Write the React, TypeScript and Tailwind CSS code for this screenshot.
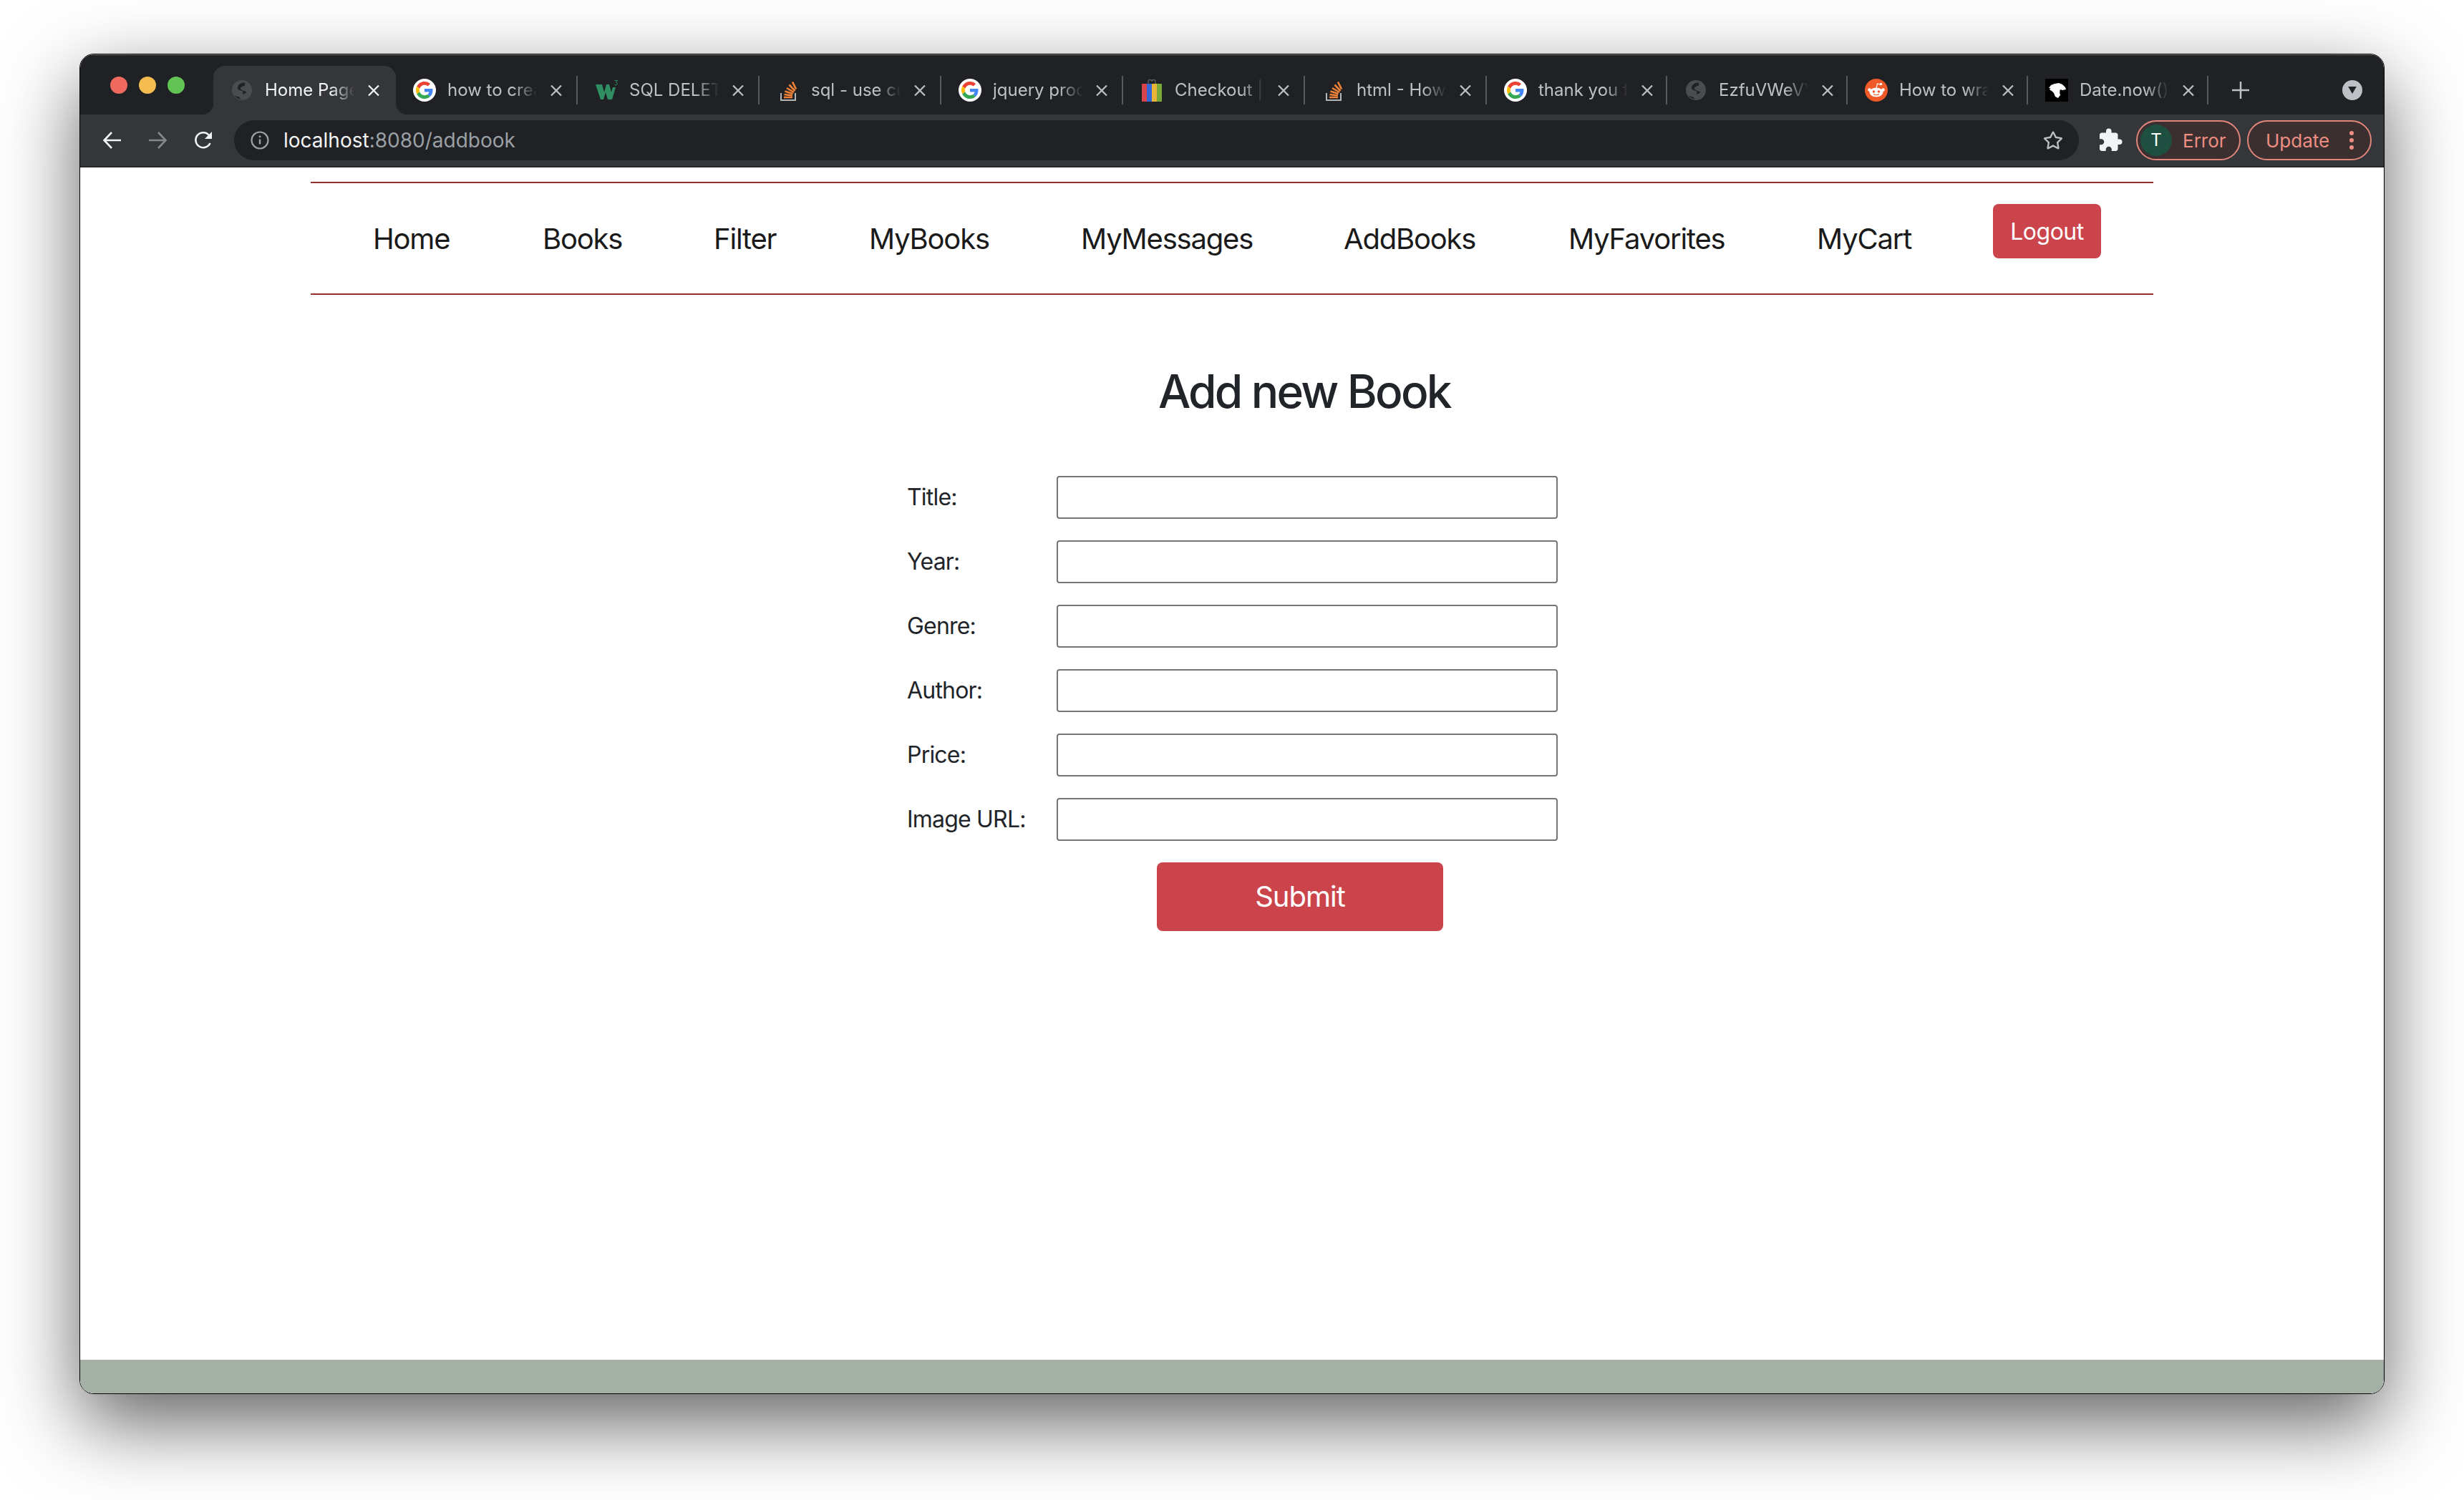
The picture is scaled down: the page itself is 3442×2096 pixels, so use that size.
import React from "react";
import { MdExtension } from "react-icons/md";
import { FaRegStar } from "react-icons/fa";

const font = "font-['Inter','Liberation_Sans',sans-serif]";

function Google() {
  return (
    <div className="w-[32px] h-[32px] rounded-full bg-white flex items-center justify-center">
      <svg viewBox="0 0 48 48" className="w-[24px] h-[24px]">
        <path fill="#EA4335" d="M24 9.5c3.54 0 6.71 1.22 9.21 3.6l6.85-6.85C35.9 2.38 30.47 0 24 0 14.62 0 6.51 5.38 2.56 13.22l7.98 6.19C12.43 13.72 17.74 9.5 24 9.5z" />
        <path fill="#4285F4" d="M46.98 24.55c0-1.57-.15-3.09-.38-4.55H24v9.02h12.94c-.58 2.96-2.26 5.48-4.78 7.18l7.73 6c4.51-4.18 7.09-10.36 7.09-17.65z" />
        <path fill="#FBBC05" d="M10.53 28.59c-.48-1.45-.76-2.99-.76-4.59s.27-3.14.76-4.59l-7.98-6.19C.92 16.46 0 20.12 0 24c0 3.88.92 7.54 2.56 10.78l7.97-6.19z" />
        <path fill="#34A853" d="M24 48c6.48 0 11.93-2.13 15.89-5.81l-7.73-6c-2.15 1.45-4.92 2.3-8.16 2.3-6.26 0-11.57-4.22-13.47-9.91l-7.98 6.19C6.51 42.62 14.62 48 24 48z" />
      </svg>
    </div>
  );
}

function Globe() {
  return (
    <svg viewBox="0 0 28 28" className="w-[28px] h-[28px]">
      <circle cx="14" cy="14" r="14" fill="#4a4c50" />
      <path d="M18 3.5C13 3 8.5 6 8 10.5c-.3 3 3 3.5 6 4.5 2 .7 1.5 3 .5 4.5 3-.2 4.5-1 6-3-3-1.500-7.500-2-8.500-4.500-.7-2 2.500-3.500 6-4.500z" fill="#202124" />
      <path d="M3 21c2 1.500 5 2.500 7 2.500 1 1 1.500 2 3 3-3.500.2-7.500-2-10-5.500z" fill="#202124" />
    </svg>
  );
}

function W3() {
  return (
    <svg viewBox="0 0 33 32" className="w-[33px] h-[32px]">
      <path d="M1 8h9l3 11 3-11h4l3 11 2-7h4l-5 17h-6l-3-10-3 10H8z" fill="#2f8f63" />
      <path d="M27.500 2.500h4l-2 2.500a2 2 0 1 1-2 3" fill="none" stroke="#2f8f63" strokeWidth="1" />
    </svg>
  );
}

function SO() {
  return (
    <svg viewBox="0 0 32 32" className="w-[32px] h-[32px]">
      <path d="M6 20v10h20V20" fill="none" stroke="#b4b5b6" strokeWidth="2" />
      <g stroke="#ef8236" strokeWidth="2.600" fill="none">
        <path d="M10 26h12" />
        <path d="M10.500 22l11.500 1.500" />
        <path d="M11.500 17.500l11 3.500" />
        <path d="M14 13l10 6" />
        <path d="M17.500 8.500l8 8.500" />
        <path d="M22 4.500l5 10" />
      </g>
    </svg>
  );
}

function Bag() {
  return (
    <svg viewBox="0 0 28 32" className="w-[28px] h-[32px]">
      <path d="M9 8V4a2.500 2.500 0 0 1 5 0 2.500 2.500 0 0 1 5 0v4" fill="none" stroke="#55575a" strokeWidth="1.500" />
      <rect x="0" y="7" width="7" height="25" fill="#d9434a" />
      <rect x="7" y="7" width="7" height="25" fill="#3367d6" />
      <rect x="14" y="7" width="7" height="25" fill="#e9b338" />
      <rect x="21" y="7" width="7" height="25" fill="#79a83a" />
    </svg>
  );
}

function Reddit() {
  return (
    <svg viewBox="0 0 32 32" className="w-[32px] h-[32px]">
      <circle cx="16" cy="16" r="16" fill="#f05a28" />
      <ellipse cx="16" cy="19" rx="9.500" ry="6.500" fill="#fff" />
      <circle cx="6.500" cy="15.500" r="2.300" fill="#fff" />
      <circle cx="25.500" cy="15.500" r="2.300" fill="#fff" />
      <path d="M16 13l1.500-6 4 1" fill="none" stroke="#fff" strokeWidth="1.200" />
      <circle cx="22.500" cy="7.500" r="1.700" fill="#fff" />
      <circle cx="12.500" cy="18" r="1.700" fill="#f05a28" />
      <circle cx="19.500" cy="18" r="1.700" fill="#f05a28" />
      <path d="M12 21.500c2 1.600 6 1.600 8 0" fill="none" stroke="#f05a28" strokeWidth="1.100" />
    </svg>
  );
}

function Mdn() {
  return (
    <svg viewBox="0 0 32 32" className="w-[32px] h-[32px]">
      <rect width="32" height="32" fill="#000" />
      <path d="M5 13l3-4 5-2 6-1 5 2 4 4 1 3-5 1-3-1c-1 2-1 5 0 8l-3 4-4-2-2-5-3-3-2-1-1-2 2-1z" fill="#fff" />
    </svg>
  );
}

const tabs: { title: string; icon: React.ReactNode; w: string; active?: boolean; sep?: boolean }[] = [
  { title: "Home Page", icon: <Globe />, w: "w-[255px]", active: true },
  { title: "how to create a form", icon: <Google />, w: "w-[254px]", sep: true },
  { title: "SQL DELETE Statement", icon: <W3 />, w: "w-[254px]", sep: true },
  { title: "sql - use cursor", icon: <SO />, w: "w-[254px]", sep: true },
  { title: "jquery procedure", icon: <Google />, w: "w-[254px]", sep: true },
  { title: "Checkout | Store", icon: <Bag />, w: "w-[254px]", sep: true },
  { title: "html - How to make", icon: <SO />, w: "w-[254px]", sep: true },
  { title: "thank you for all", icon: <Google />, w: "w-[252px]", sep: true },
  { title: "EzfuVWeVYkL", icon: <Globe />, w: "w-[252px]", sep: true },
  { title: "How to wrap a", icon: <Reddit />, w: "w-[252px]", sep: true },
  { title: "Date.now() - Java", icon: <Mdn />, w: "w-[252px]", sep: true },
];

function Tab({ title, icon, w, active, sep }: { title: string; icon: React.ReactNode; w: string; active?: boolean; sep?: boolean }) {
  return (
    <div className={`relative flex h-[68px] ${w} shrink-0 items-center ${active ? "rounded-t-[16px] bg-[#35363a] text-[#f1f3f4]" : "text-[#bdc1c6]"}`}>
      {active && (
        <>
          <div className="absolute bottom-0 left-[-16px] h-[16px] w-[16px] bg-[radial-gradient(circle_at_0_0,#202124_16px,#35363a_16.5px)]" />
          <div className="absolute bottom-0 right-[-16px] h-[16px] w-[16px] bg-[radial-gradient(circle_at_100%_0,#202124_16px,#35363a_16.5px)]" />
        </>
      )}
      <div className="ml-[23px] flex w-[34px] shrink-0 items-center justify-center">{icon}</div>
      <div className="ml-[15px] w-[128px] shrink-0 overflow-hidden whitespace-nowrap text-[24px] leading-[32px] [mask-image:linear-gradient(to_right,black_72%,transparent_98%)]">
        {title}
      </div>
      <svg viewBox="0 0 16 15" className="ml-[16px] h-[15px] w-[16px] shrink-0">
        <path d="M1 .5l14 14M15 .5l-14 14" stroke="currentColor" strokeWidth="2.200" />
      </svg>
      {sep && <div className="ml-auto mr-0 h-[40px] w-[2px] bg-[#56585c]" />}
    </div>
  );
}

const links = [
  { label: "Home", w: "w-[237px]" },
  { label: "Books", w: "w-[239px]" },
  { label: "Filter", w: "w-[217px]" },
  { label: "MyBooks", w: "w-[296px]" },
  { label: "MyMessages", w: "w-[367px]" },
  { label: "AddBooks", w: "w-[314px]" },
  { label: "MyFavorites", w: "w-[347px]" },
  { label: "MyCart", w: "w-[246px]" },
];

const fields = ["Title:", "Year:", "Genre:", "Author:", "Price:", "Image URL:"];

export default function App() {
  return (
    <div className={`h-[2096px] w-[3442px] overflow-hidden bg-white pl-[111px] pt-[75px] ${font}`}>
      <div className="flex h-[1873px] w-[3220px] flex-col overflow-hidden rounded-[20px] border border-black bg-white shadow-[0_40px_110px_rgba(0,0,0,0.62)]">
        <div className="flex h-[84px] shrink-0 bg-[#202124] pt-[16px] shadow-[inset_0_1px_0_#77787a]">
          <div className="flex w-[186px] shrink-0 gap-[16px] pl-[42px] pt-[15px]">
            <div className="h-[24px] w-[24px] rounded-full bg-[#ee6a5f]" />
            <div className="h-[24px] w-[24px] rounded-full bg-[#f5bd4f]" />
            <div className="h-[24px] w-[24px] rounded-full bg-[#61c454]" />
          </div>
          {tabs.map((t) => (
            <Tab key={t.title} {...t} />
          ))}
          <svg viewBox="0 0 24 24" className="ml-[33px] mt-[22px] h-[24px] w-[24px] shrink-0 text-[#bdc1c6]">
            <path d="M12 0v24M0 12h24" stroke="currentColor" strokeWidth="2.500" />
          </svg>
          <div className="ml-[130px] mt-[20px] flex h-[28px] w-[28px] shrink-0 items-center justify-center rounded-full bg-[#bdc1c6]">
            <svg viewBox="0 0 14 12" className="h-[10px] w-[12px]">
              <path d="M0 0h14L7 12z" fill="#202124" />
            </svg>
          </div>
        </div>

        <div className="flex h-[72px] shrink-0 items-center bg-[#35363a] text-white">
          <div className="flex items-center">
            <svg viewBox="0 0 28 28" className="ml-[31px] h-[28px] w-[28px]">
              <path d="M26 14H3M13 3L2.500 14 13 25" fill="none" stroke="#f1f3f4" strokeWidth="2.600" />
            </svg>
            <svg viewBox="0 0 28 28" className="ml-[35px] h-[28px] w-[28px]">
              <path d="M2 14h23M15 3l10.500 11L15 25" fill="none" stroke="#86888b" strokeWidth="2.600" />
            </svg>
            <svg viewBox="0 0 28 28" className="ml-[36px] h-[28px] w-[28px]">
              <path d="M23.500 18a10.500 10.500 0 1 1-1.500-11" fill="none" stroke="#f1f3f4" strokeWidth="2.600" />
              <path d="M26 2v10H16z" fill="#f1f3f4" />
            </svg>
          </div>
          <div className="ml-[29px] flex h-[56px] w-[2577px] shrink-0 items-center rounded-full bg-[#202124]">
            <svg viewBox="0 0 26 26" className="ml-[23px] h-[26px] w-[26px]">
              <circle cx="13" cy="13" r="11.500" fill="none" stroke="#9aa0a6" strokeWidth="2.200" />
              <path d="M13 11.500v7" stroke="#9aa0a6" strokeWidth="2.400" />
              <circle cx="13" cy="7.800" r="1.500" fill="#9aa0a6" />
            </svg>
            <span className="ml-[20px] text-[28px] text-[#f1f3f4]">
              localhost<span className="text-[#9aa0a6]">:8080/addbook</span>
            </span>
            <FaRegStar className="ml-auto mr-[22px] h-[28px] w-[28px] text-[#bdc1c6]" />
          </div>
          <MdExtension className="ml-[26px] h-[36px] w-[36px] text-[#f1f3f4]" />
          <div className="ml-[18px] flex h-[56px] w-[146px] shrink-0 items-center rounded-full border-2 border-[#e2857a] bg-[#3b2f30]">
            <div className="ml-[4px] flex h-[44px] w-[44px] items-center justify-center rounded-full bg-[#1e4f41] text-[24px] text-white">T</div>
            <span className="ml-[15px] text-[26px] text-[#ee8e82]">Error</span>
          </div>
          <div className="ml-[9px] flex h-[56px] w-[174px] shrink-0 items-center rounded-full border-2 border-[#e2857a] bg-[#3b2f30]">
            <span className="ml-[24px] text-[26px] text-[#ee8e82]">Update</span>
            <div className="ml-auto mr-[23px] flex flex-col gap-[4px]">
              <div className="h-[6px] w-[6px] rounded-full bg-[#ee8e82]" />
              <div className="h-[6px] w-[6px] rounded-full bg-[#ee8e82]" />
              <div className="h-[6px] w-[6px] rounded-full bg-[#ee8e82]" />
            </div>
          </div>
        </div>
        <div className="h-[2px] shrink-0 bg-[#26272a]" />

        <div className="flex flex-1 flex-col bg-white">
          <div className="ml-[322px] mt-[20px] flex h-[158px] w-[2574px] items-start border-y-2 border-[#962d2d] pl-[87px]">
            {links.map((l) => (
              <a key={l.label} className={`${l.w} mt-[54px] shrink-0 whitespace-nowrap text-[40px] leading-[48px] tracking-[-1.2px] text-[#1a1a1a]`}>
                {l.label}
              </a>
            ))}
            <button className="mt-[29px] h-[76px] w-[151px] shrink-0 rounded-[8px] bg-[#cc444b] pt-[2px] text-[32px] tracking-[-0.5px] text-white">Logout</button>
          </div>

          <h1 className="ml-[1506px] mt-[97px] whitespace-nowrap text-[64px] font-medium leading-[76px] tracking-[-2.8px] text-[#212529]">Add new Book</h1>

          <form className="ml-[1155px] mt-[80px] flex flex-col gap-[30px]">
            {fields.map((f) => (
              <div key={f} className="flex h-[60px] items-center">
                <label className="w-[209px] shrink-0 whitespace-nowrap text-[32px] tracking-[-0.8px] text-[#212529]">{f}</label>
                <input className="h-[60px] w-[700px] rounded-[4px] border-2 border-[#767676] bg-white" />
              </div>
            ))}
          </form>
          <button className="ml-[1504px] mt-[30px] h-[96px] w-[400px] rounded-[8px] bg-[#cc444b] text-[40px] tracking-[-1px] text-white">Submit</button>

          <div className="mt-auto h-[47px] bg-[#a4b0a6]" />
        </div>
      </div>
    </div>
  );
}
